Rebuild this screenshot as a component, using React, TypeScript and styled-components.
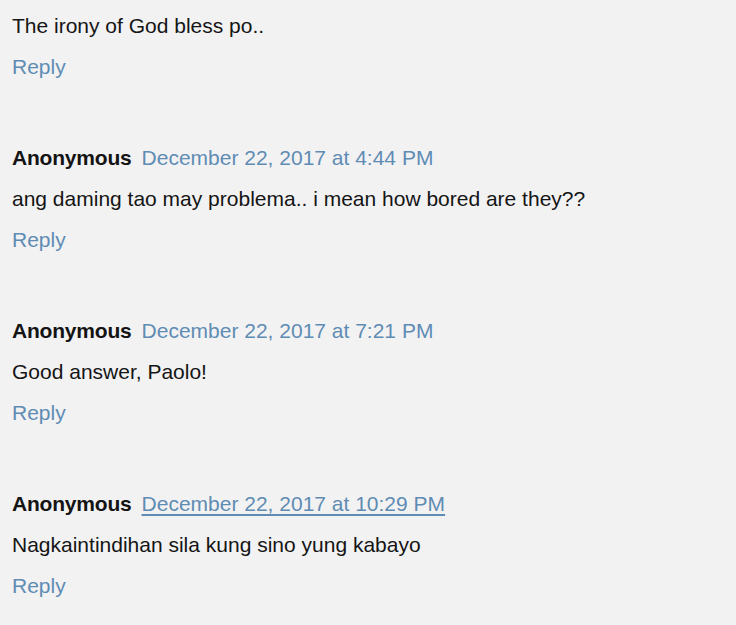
import React from "react";
import styled, { createGlobalStyle } from "styled-components";

const Global = createGlobalStyle`
  html, body {
    margin: 0;
    padding: 0;
    background: #f2f2f3;
  }
  body {
    font-family: "Liberation Sans", Arial, sans-serif;
  }
`;

const Page = styled.div`
  padding: 5px 12px 0 12px;
  font-family: "Liberation Sans", Arial, sans-serif;
  font-size: 21px;
  color: #151515;
`;

const Comment = styled.div`
  display: flex;
  flex-direction: column;
  margin-bottom: 50px;
`;

const Header = styled.div`
  display: flex;
  align-items: baseline;
  gap: 10px;
  line-height: 41px;
  white-space: nowrap;
`;

const Author = styled.span`
  font-weight: bold;
  color: #141414;
  letter-spacing: -0.2px;
`;

const DateLink = styled.a<{ $hover?: boolean }>`
  color: #5f8cb3;
  text-decoration: ${(p) => (p.$hover ? "underline" : "none")};
  text-underline-offset: 3px;
  cursor: pointer;
`;

const Body = styled.div`
  line-height: 41px;
`;

const ReplyLink = styled.a`
  color: #5f8cb3;
  text-decoration: none;
  line-height: 41px;
  align-self: flex-start;
  cursor: pointer;
`;

type C = { author?: string; date?: string; text: string; hover?: boolean };

const comments: C[] = [
  { text: "The irony of God bless po.." },
  {
    author: "Anonymous",
    date: "December 22, 2017 at 4:44 PM",
    text: "ang daming tao may problema.. i mean how bored are they??",
  },
  {
    author: "Anonymous",
    date: "December 22, 2017 at 7:21 PM",
    text: "Good answer, Paolo!",
  },
  {
    author: "Anonymous",
    date: "December 22, 2017 at 10:29 PM",
    text: "Nagkaintindihan sila kung sino yung kabayo",
    hover: true,
  },
];

export default function App() {
  return (
    <>
      <Global />
      <Page>
        {comments.map((c, i) => (
          <Comment key={i}>
            {c.author && (
              <Header>
                <Author>{c.author}</Author>
                <DateLink $hover={c.hover}>{c.date}</DateLink>
              </Header>
            )}
            <Body>{c.text}</Body>
            <ReplyLink>Reply</ReplyLink>
          </Comment>
        ))}
      </Page>
    </>
  );
}
